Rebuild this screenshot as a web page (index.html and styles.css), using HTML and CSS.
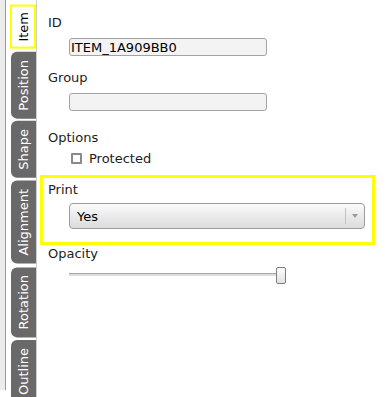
FILE: index.html
```html
<!DOCTYPE html>
<html lang="en">

<head>
    <meta charset="UTF-8">
    <title>Item Properties</title>
    <link rel="stylesheet" href="styles.css">
</head>

<body>
    <div class="app">
        <div class="rail"></div>

        <nav class="tabs">
            <a class="tab active" href="javascript:void(0)">Item</a>
            <a class="tab" href="javascript:void(0)">Position</a>
            <a class="tab" href="javascript:void(0)">Shape</a>
            <a class="tab" href="javascript:void(0)">Alignment</a>
            <a class="tab" href="javascript:void(0)">Rotation</a>
            <a class="tab" href="javascript:void(0)">Outline</a>
        </nav>

        <form class="props">
            <div class="field text-field">
                <label class="field-label" for="itemId">ID</label>
                <input class="text-input" id="itemId" type="text" value="ITEM_1A909BB0">
            </div>

            <div class="field text-field group-field">
                <label class="field-label" for="itemGroup">Group</label>
                <input class="text-input" id="itemGroup" type="text" value="">
            </div>

            <div class="field check-field">
                <span class="field-label">Options</span>
                <label class="check-row">
                    <span class="check-box"></span>
                    <span>Protected</span>
                </label>
            </div>

            <div class="field select-field is-current">
                <span class="field-label">Print</span>
                <div class="select">
                    <span class="select-value">Yes</span>
                    <span class="select-btn"><span class="select-arrow"></span></span>
                </div>
            </div>

            <div class="field slider-field">
                <span class="field-label">Opacity</span>
                <div class="slider">
                    <div class="slider-track"></div>
                    <div class="slider-thumb"></div>
                </div>
            </div>
        </form>
    </div>
</body>

</html>
```

FILE: styles.css
```css
body {
    font-family: "DejaVu Sans", Verdana, sans-serif;
    font-size: 13px;
    margin: 0;
    background: #fff;
    color: #1c1c1c;
}

.app {
    display: flex;
    height: 397px;
    overflow: hidden;
}

.rail {
    width: 5px;
    margin-bottom: 7px;
    background: #ececec;
    border-right: 1px solid #9a9a9a;
}

/* vertical tab strip */
.tabs {
    display: flex;
    flex-direction: column;
    gap: 3px;
    width: 25px;
    margin-left: 5px;
    padding-top: 5px;
    border-right: 1px solid #cfcfcf;
}

.tab {
    writing-mode: vertical-rl;
    transform: rotate(180deg);
    display: flex;
    align-items: center;
    justify-content: center;
    padding: 8px 0;
    line-height: 15px;
    background: #696969;
    color: #fff;
    text-decoration: none;
    border-radius: 0 6px 6px 0;
    flex-shrink: 0;
}

.tab.active {
    background: #fff;
    color: #000;
    border: 2px solid #ffff00;
    border-radius: 0;
    padding: 5px 0;
    margin-left: -1px;
}

/* property panel */
.props {
    width: 335px;
    margin: 0;
    padding: 15px 0 0 3px;
}

.field {
    position: relative;
    display: flex;
    flex-direction: column;
    align-items: flex-start;
    padding-left: 8px;
}

.field-label {
    line-height: 15px;
}

.group-field {
    margin-top: 14px;
}

.check-field {
    margin-top: 19px;
}

.select-field {
    margin-top: 16px;
}

.slider-field {
    margin-top: 17px;
}

.text-input {
    box-sizing: border-box;
    width: 198px;
    height: 18px;
    margin: 8px 0 0 21px;
    padding: 0 1px;
    border: 1px solid #a3a3a3;
    border-radius: 3px;
    background: #f3f3f3;
    font: inherit;
    color: #000;
    outline: none;
}

.check-row {
    display: flex;
    align-items: center;
    gap: 7px;
    margin: 6px 0 0 23px;
    line-height: 15px;
}

.check-box {
    box-sizing: border-box;
    width: 11px;
    height: 11px;
    border: 2px solid #8a8a8a;
    border-radius: 1px;
    background: #fff;
}

/* yellow highlight round the current field */
.is-current::before {
    content: "";
    position: absolute;
    top: -7px;
    bottom: -16px;
    left: 0;
    right: 0;
    border: 3px solid #ffff00;
}

.select {
    box-sizing: border-box;
    display: flex;
    align-items: center;
    width: 296px;
    height: 26px;
    margin: 6px 0 0 21px;
    border: 1px solid #9c9c9c;
    border-radius: 4px;
    background: linear-gradient(#fbfbfb, #e9e9e9 55%, #dcdcdc);
    color: #000;
}

.select-value {
    flex: 1;
    padding-left: 7px;
}

.select-btn {
    display: flex;
    align-items: center;
    justify-content: center;
    width: 18px;
    height: 16px;
    border-left: 1px solid #c2c2c2;
}

.select-arrow {
    width: 0;
    height: 0;
    margin-left: -1px;
    border-left: 3px solid transparent;
    border-right: 3px solid transparent;
    border-top: 4px solid #9a9a9a;
}

.slider {
    position: relative;
    width: 217px;
    height: 17px;
    margin: 6px 0 0 21px;
}

.slider-track {
    position: absolute;
    top: 6px;
    left: 0;
    width: 208px;
    height: 2px;
    border-top: 1px solid #a6a6a6;
    background: #dedede;
}

.slider-thumb {
    position: absolute;
    top: 0;
    left: 207px;
    box-sizing: border-box;
    width: 10px;
    height: 17px;
    border: 1px solid #7d7d7d;
    border-radius: 2px;
    background: linear-gradient(#fdfdfd, #e2e2e2);
}
```
